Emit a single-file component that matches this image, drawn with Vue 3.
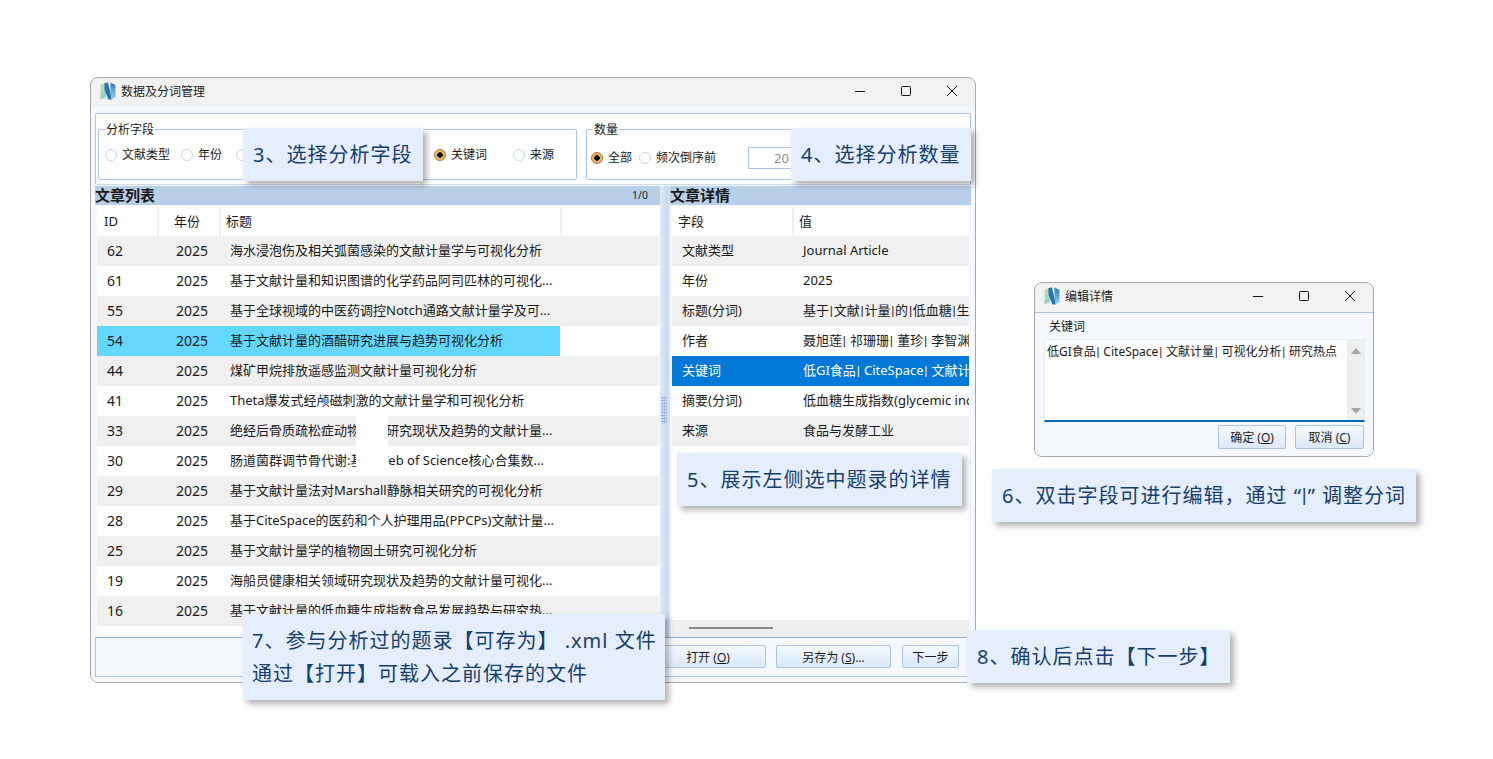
<template>
  <div class="page">
    <!-- 主窗口 -->
    <div class="win main-win">
      <div class="titlebar">
        <svg class="logo" viewBox="0 0 16 18">
          <defs>
            <linearGradient id="lg1" x1="0" y1="0" x2="0" y2="1">
              <stop offset="0" stop-color="#c3e0a6" />
              <stop offset="1" stop-color="#8fd0c6" />
            </linearGradient>
            <linearGradient id="lg2" x1="0" y1="0" x2="0" y2="1">
              <stop offset="0" stop-color="#2a79bd" />
              <stop offset="1" stop-color="#9fcfe8" />
            </linearGradient>
          </defs>
          <path d="M0.5 3 L6 0.5 L6 15 L0.5 17.5 Z" fill="url(#lg1)" />
          <path d="M4.5 1 L8 0.5 L12 17.5 L8.5 17.5 L4.5 8 Z" fill="#2474b8" />
          <path d="M10.5 0.5 L15.5 3 L15.5 15 L11.5 17.5 L10.5 11 Z" fill="url(#lg2)" />
        </svg>
        <span class="win-title">数据及分词管理</span>
        <div class="controls">
          <span class="ctl"><svg viewBox="0 0 12 12"><path d="M1 6.5H11" /></svg></span>
          <span class="ctl"><svg viewBox="0 0 12 12"><rect x="1.5" y="1.5" width="9" height="9" rx="1" /></svg></span>
          <span class="ctl"><svg viewBox="0 0 12 12"><path d="M1 1L11 11M11 1L1 11" /></svg></span>
        </div>
      </div>

      <div class="client">
        <div class="options">
          <div class="group field-group">
            <span class="legend">分析字段</span>
            <label v-for="f in fieldOptions" :key="f.name" class="radio-item">
              <i class="radio" :class="{ on: f.on }"></i>{{ f.name }}
            </label>
          </div>
          <div class="group count-group">
            <span class="legend">数量</span>
            <label class="radio-item"><i class="radio on"></i>全部</label>
            <label class="radio-item"><i class="radio"></i>频次倒序前</label>
            <span class="count-input">20</span>
          </div>
        </div>

        <div class="panes">
          <div class="pane left-pane">
            <div class="pane-head"><b>文章列表</b><span class="counter">1/0</span></div>
            <div class="table">
              <div class="row head list-head">
                <span>ID</span><span>年份</span><span>标题</span><span></span>
              </div>
              <div
                v-for="(a, i) in articles"
                :key="a.id"
                class="row list-cols"
                :class="{ stripe: i % 2 === 0 && a.id !== 54 || a.id === 44, current: a.id === 54 }"
              >
                <span class="num id">{{ a.id }}</span>
                <span class="num year">2025</span>
                <span class="title">{{ a.title }}</span>
                <span></span>
              </div>
              <div class="patch"></div>
            </div>
          </div>

          <div class="splitter"><i class="grip"></i></div>

          <div class="pane right-pane">
            <div class="pane-head"><b>文章详情</b></div>
            <div class="table">
              <div class="row head detail-head">
                <span>字段</span><span>值</span>
              </div>
              <div
                v-for="d in details"
                :key="d.k"
                class="row detail-cols"
                :class="{ stripe: d.stripe, active: d.active }"
              >
                <span class="k">{{ d.k }}</span>
                <span class="v">
                  <template v-for="(p, i) in pipeParts(d.v)" :key="i"><i v-if="i" class="pipe">|</i>{{ p }}</template>
                </span>
              </div>
              <div class="hscroll"><i></i></div>
            </div>
          </div>
        </div>

        <div class="footer">
          <button class="btn open">打开 (<u>O</u>)</button>
          <button class="btn save">另存为 (<u>S</u>)...</button>
          <button class="btn next">下一步</button>
        </div>
      </div>
    </div>

    <!-- 编辑详情对话框 -->
    <div class="win dialog">
      <div class="titlebar">
        <svg class="logo" viewBox="0 0 16 18">
          <path d="M0.5 3 L6 0.5 L6 15 L0.5 17.5 Z" fill="url(#lg1)" />
          <path d="M4.5 1 L8 0.5 L12 17.5 L8.5 17.5 L4.5 8 Z" fill="#2474b8" />
          <path d="M10.5 0.5 L15.5 3 L15.5 15 L11.5 17.5 L10.5 11 Z" fill="url(#lg2)" />
        </svg>
        <span class="win-title">编辑详情</span>
        <div class="controls">
          <span class="ctl"><svg viewBox="0 0 12 12"><path d="M1 6.5H11" /></svg></span>
          <span class="ctl"><svg viewBox="0 0 12 12"><rect x="1.5" y="1.5" width="9" height="9" rx="1" /></svg></span>
          <span class="ctl"><svg viewBox="0 0 12 12"><path d="M1 1L11 11M11 1L1 11" /></svg></span>
        </div>
      </div>
      <div class="dialog-body">
        <div class="dialog-label">关键词</div>
        <div class="editor">
          <div class="editor-text">
            <template v-for="(p, i) in pipeParts(keywords)" :key="i"><i v-if="i" class="pipe">|</i>{{ p }}</template>
          </div>
          <div class="vscroll">
            <svg viewBox="0 0 10 8"><path d="M5 1L10 7H0Z" /></svg>
            <svg viewBox="0 0 10 8"><path d="M0 1H10L5 7Z" /></svg>
          </div>
        </div>
        <div class="dialog-btns">
          <button class="btn ok">确定 (<u>O</u>)</button>
          <button class="btn cancel">取消 (<u>C</u>)</button>
        </div>
      </div>
    </div>

    <!-- 说明标注 -->
    <div class="note n3">3、选择分析字段</div>
    <div class="note n4">4、选择分析数量</div>
    <div class="note n5">5、展示左侧选中题录的详情</div>
    <div class="note n6">6、双击字段可进行编辑，通过 “<i class="pipe">|</i>” 调整分词</div>
    <div class="note n7">7、参与分析过的题录【可存为】 .xml 文件<br />通过【打开】可载入之前保存的文件</div>
    <div class="note n8">8、确认后点击【下一步】</div>
  </div>
</template>

<script setup>
const fieldOptions = [
  { name: "文献类型" },
  { name: "年份" },
  { name: "标题" },
  { name: "作者" },
  { name: "关键词", on: true },
  { name: "来源" },
];

const articles = [
  { id: 62, title: "海水浸泡伤及相关弧菌感染的文献计量学与可视化分析" },
  { id: 61, title: "基于文献计量和知识图谱的化学药品阿司匹林的可视化..." },
  { id: 55, title: "基于全球视域的中医药调控Notch通路文献计量学及可..." },
  { id: 54, title: "基于文献计量的酒醋研究进展与趋势可视化分析" },
  { id: 44, title: "煤矿甲烷排放遥感监测文献计量可视化分析" },
  { id: 41, title: "Theta爆发式经颅磁刺激的文献计量学和可视化分析" },
  { id: 33, title: "绝经后骨质疏松症动物模型研究现状及趋势的文献计量..." },
  { id: 30, title: "肠道菌群调节骨代谢:基于Web of Science核心合集数..." },
  { id: 29, title: "基于文献计量法对Marshall静脉相关研究的可视化分析" },
  { id: 28, title: "基于CiteSpace的医药和个人护理用品(PPCPs)文献计量..." },
  { id: 25, title: "基于文献计量学的植物固土研究可视化分析" },
  { id: 19, title: "海船员健康相关领域研究现状及趋势的文献计量可视化..." },
  { id: 16, title: "基于文献计量的低血糖生成指数食品发展趋势与研究热..." },
];

const keywords = "低GI食品| CiteSpace| 文献计量| 可视化分析| 研究热点";

const details = [
  { k: "文献类型", v: "Journal Article", stripe: true },
  { k: "年份", v: "2025" },
  { k: "标题(分词)", v: "基于|文献|计量|的|低血糖|生成|指数|食品", stripe: true },
  { k: "作者", v: "聂旭莲| 祁珊珊| 董珍| 李智渊| 王" },
  { k: "关键词", v: keywords, active: true },
  { k: "摘要(分词)", v: "低血糖生成指数(glycemic index" },
  { k: "来源", v: "食品与发酵工业", stripe: true },
];

// 竖线要比正文字体窄，单独包一层
const pipeParts = (text) => text.split("|");
</script>

<style scoped>
.page {
  position: relative;
  width: 1493px;
  height: 759px;
  overflow: hidden;
  background: #fff;
  font-family: "Noto Sans", "Noto Sans CJK SC", sans-serif;
  font-size: 13px;
  color: #1a1a1a;
}
.pipe {
  font-family: Roboto, sans-serif;
  font-style: normal;
  padding: 0 0.75px;
}

/* 窗口 */
.win {
  position: absolute;
  box-sizing: border-box;
  border: 1px solid #a9a9a9;
  border-radius: 8px;
  background: #f2f2f2;
  overflow: hidden;
  display: flex;
  flex-direction: column;
}
.main-win {
  left: 90px;
  top: 77px;
  width: 886px;
  height: 606px;
}
.dialog {
  left: 1034px;
  top: 282px;
  width: 340px;
  height: 175px;
}
.titlebar {
  height: 29px;
  flex: none;
  box-sizing: border-box;
  padding: 0 0 4px 9px;
  display: flex;
  align-items: center;
}
.logo {
  width: 16px;
  height: 18px;
  margin-right: 5px;
}
.win-title {
  font-size: 12px;
  color: #222;
}
.controls {
  margin-left: auto;
  display: flex;
}
.ctl {
  width: 46px;
  height: 25px;
  display: flex;
  align-items: center;
  justify-content: center;
}
.ctl svg {
  width: 12px;
  height: 12px;
  fill: none;
  stroke: #111;
  stroke-width: 1;
}

.client {
  flex: 1;
  min-height: 0;
  display: flex;
  flex-direction: column;
  box-sizing: border-box;
  padding: 6px 4px 5px;
  background: #f5f9ff;
}

/* 顶部选项 */
.options {
  height: 72px;
  flex: none;
  box-sizing: border-box;
  border: 1px solid #a9c4ea;
  border-bottom-color: #c9daf2;
  border-radius: 2px;
  background: #fff;
  padding: 15px 2px 0;
  display: flex;
  gap: 9px;
}
.group {
  position: relative;
  box-sizing: border-box;
  height: 51px;
  border: 1px solid #a9c4ea;
  border-radius: 2px;
  display: grid;
  align-items: center;
  font-size: 12px;
}
.legend {
  position: absolute;
  left: 6px;
  top: -8px;
  line-height: 16px;
  padding: 0 1px;
  background: #fff;
}
.field-group {
  width: 479px;
  grid-template-columns: 76px 55px 99px 99px 79px 60px;
  padding: 17px 0 0 6px;
  align-content: start;
}
.count-group {
  width: 382px;
  grid-template-columns: 48px 108px 1fr;
  padding: 17px 0 0 4px;
  align-content: start;
}
.radio-item {
  display: flex;
  align-items: center;
  line-height: 16px;
}
.radio {
  width: 12px;
  height: 12px;
  flex: none;
  box-sizing: border-box;
  margin-right: 5px;
  border: 1px solid #c3d6ea;
  border-radius: 50%;
  background: #fff;
}
.radio.on {
  border: 1px solid #a8733a;
  background: radial-gradient(circle, #000 0 2.5px, #f6b566 3px);
}
.count-input {
  box-sizing: border-box;
  width: 70px;
  height: 22px;
  margin-left: 1px;
  padding-left: 25px;
  border: 1px solid #a9c4ea;
  line-height: 20px;
  font-size: 13px;
  color: #8a8a8a;
}

/* 左右两栏 */
.panes {
  flex: none;
  height: 451px;
  margin-top: 1px;
  display: flex;
}
.pane {
  display: flex;
  flex-direction: column;
  box-sizing: border-box;
}
.left-pane {
  width: 565px;
}
.right-pane {
  width: 301px;
}
.pane-head {
  height: 19px;
  flex: none;
  display: flex;
  align-items: center;
  justify-content: space-between;
  background: #b8cfe9;
  font-size: 15px;
  line-height: 19px;
  white-space: nowrap;
}
.pane-head b {
  font-weight: 700;
}
.counter {
  font-size: 10.5px;
  margin-right: 12px;
}
.splitter {
  position: relative;
  width: 10px;
  flex: none;
  background: linear-gradient(90deg, #e2ecfa, #c6d9f2 70%, #dce8f8);
}
.grip {
  position: absolute;
  left: 1px;
  top: 210px;
  width: 6px;
  height: 28px;
  background-image: radial-gradient(circle, #9db8de 1px, transparent 1.2px);
  background-size: 2.5px 3px;
}
.table {
  position: relative;
  flex: 1;
  min-height: 0;
  margin-top: 1px;
  background: #fff;
  overflow: hidden;
}
.left-pane .table {
  margin-left: 2px;
  margin-right: 1px;
}
.right-pane .table {
  margin-left: 2px;
  margin-right: 2px;
}
.row {
  display: grid;
  height: 30px;
  line-height: 29px;
  white-space: nowrap;
}
.row.head span {
  box-sizing: border-box;
  height: 29px;
  line-height: 29px;
  margin-top: 1px;
  padding-left: 7px;
  border-right: 2px solid #efefef;
}
.row.head span:last-child {
  border-right: 0;
}
.list-head {
  grid-template-columns: 62px 62px 341px 97px;
}
.list-head span:nth-child(2) {
  padding-left: 15px;
}
.list-head span:nth-child(3) {
  padding-left: 5px;
}
.list-cols {
  grid-template-columns: 60px 62px 341px 99px;
}
.detail-head {
  grid-template-columns: 122px 175px;
}
.detail-head span:first-child {
  padding-left: 6px;
}
.detail-head span:last-child {
  padding-left: 5px;
}
.detail-cols {
  grid-template-columns: 121px 176px;
}
.stripe {
  background: #f0f0f0;
}
.num {
  font-size: 14px;
}
.id {
  padding-left: 10px;
}
.year {
  padding-left: 19px;
}
.title {
  padding-left: 11px;
  overflow: hidden;
}
.current .num,
.current .title {
  background: #63d7ff;
}
.k {
  padding-left: 10px;
}
.v {
  padding-left: 10px;
  overflow: hidden;
}
.active {
  background: #0078d7;
  color: #fff;
}
.patch {
  position: absolute;
  left: 259px;
  top: 210px;
  width: 32px;
  height: 60px;
  background: #fff;
}
.hscroll {
  position: absolute;
  left: 0;
  right: 0;
  bottom: 0;
  height: 17px;
  background: #efefef;
}
.hscroll i {
  position: absolute;
  left: 17px;
  top: 7px;
  width: 84px;
  height: 2px;
  background: #8a8a8a;
}

/* 底部按钮 */
.footer {
  height: 40px;
  flex: none;
  box-sizing: border-box;
  border: 1px solid #a9c4ea;
  border-top-color: #8fb0dc;
  display: flex;
  justify-content: flex-end;
  align-items: flex-start;
  padding: 7px 11px 0 0;
}
.btn {
  box-sizing: border-box;
  height: 23px;
  padding: 0;
  border: 1px solid #a9c4ea;
  border-radius: 2px;
  background: linear-gradient(#f5f9ff, #dbe9fb);
  font: inherit;
  font-size: 12px;
  color: #1a1a1a;
}
.open {
  width: 116px;
  margin-right: 10px;
}
.save {
  width: 115px;
  margin-right: 11px;
}
.next {
  width: 57px;
}

/* 对话框内容 */
.dialog-body {
  flex: 1;
  box-sizing: border-box;
  background: #f5f9ff;
  border-top: 1px solid #a9c4ea;
  padding: 6px 8px 0 9px;
}
.dialog-label {
  font-size: 12px;
  line-height: 16px;
  padding-left: 5px;
  margin-bottom: 4px;
}
.editor {
  box-sizing: border-box;
  height: 83px;
  display: flex;
  background: #fff;
  border: 1px solid #e8eef7;
  border-bottom: 2px solid #0067c0;
}
.editor-text {
  flex: 1;
  font-size: 12px;
  line-height: 16px;
  padding: 4px 0 0 2px;
  white-space: nowrap;
  overflow: hidden;
}
.vscroll {
  width: 17px;
  flex: none;
  background: #eeeeee;
  display: flex;
  flex-direction: column;
  justify-content: space-between;
  align-items: center;
  padding: 7px 0 5px;
  box-sizing: border-box;
}
.vscroll svg {
  width: 10px;
  height: 8px;
  fill: #a6a6a6;
}
.dialog-btns {
  display: flex;
  justify-content: flex-end;
  gap: 9px;
  margin-top: 3px;
  padding-right: 1px;
}
.ok {
  width: 68px;
  height: 24px;
}
.cancel {
  width: 69px;
  height: 24px;
}

/* 标注 */
.note {
  position: absolute;
  box-sizing: border-box;
  height: 53px;
  padding: 0 10px;
  line-height: 54px;
  background: #e4eefc;
  box-shadow: 4px 4px 6px rgba(0, 0, 0, 0.3);
  font-size: 20px;
  letter-spacing: 1px;
  color: #163f70;
  white-space: nowrap;
}
.note .pipe {
  padding: 0;
}
.n3 {
  left: 243px;
  top: 128px;
  width: 180px;
}
.n4 {
  left: 791px;
  top: 128px;
  width: 180px;
}
.n5 {
  left: 677px;
  top: 453px;
  width: 285px;
}
.n6 {
  left: 992px;
  top: 469px;
  width: 424px;
}
.n7 {
  left: 243px;
  top: 614px;
  width: 422px;
  height: 86px;
  padding: 10px 9px 0;
  line-height: 33px;
}
.n8 {
  left: 967px;
  top: 630px;
  width: 263px;
}
</style>

<style>
body {
  background: #fff;
}
</style>
